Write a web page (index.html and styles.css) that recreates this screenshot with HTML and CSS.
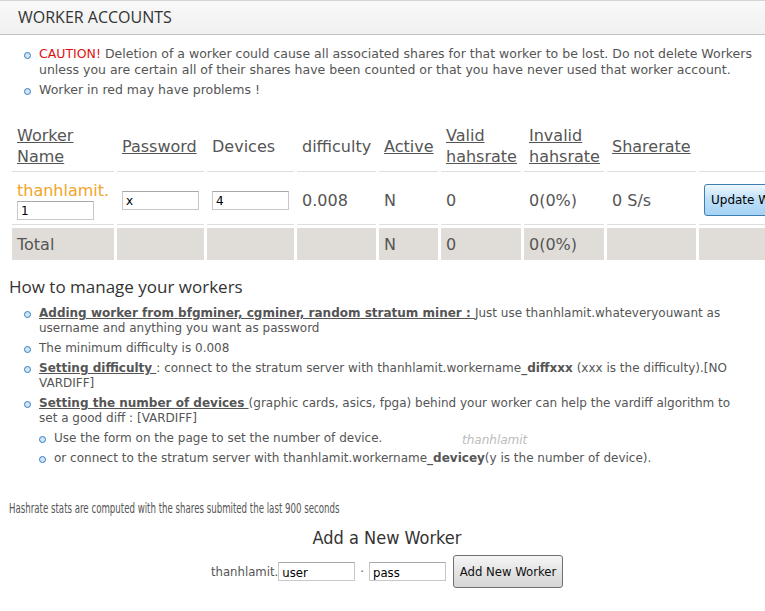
FILE: index.html
```html
<!DOCTYPE html>
<html lang="en">
<head>
    <meta charset="UTF-8">
    <meta name="viewport" content="width=device-width, initial-scale=1.0">
    <title>Worker Accounts</title>
    <link rel="stylesheet" href="styles.css">
</head>
<body>

    <div class="page-title">WORKER ACCOUNTS</div>

    <div class="content">
        <ul class="notes intro">
            <li><span class="caution">CAUTION!</span> Deletion of a worker could cause all associated shares for that worker to be lost. Do not delete Workers unless you are certain all of their shares have been counted or that you have never used that worker account.</li>
            <li>Worker in red may have problems !</li>
        </ul>

        <!-- Workers table -->
        <form id="workersForm">
            <table class="workers">
                <thead>
                    <tr>
                        <th class="col-name"><a href="#">Worker Name</a></th>
                        <th class="col-pass"><a href="#">Password</a></th>
                        <th class="col-dev">Devices</th>
                        <th class="col-diff">difficulty</th>
                        <th class="col-active"><a href="#">Active</a></th>
                        <th class="col-valid"><a href="#">Valid hahsrate</a></th>
                        <th class="col-invalid"><a href="#">Invalid hahsrate</a></th>
                        <th class="col-rate"><a href="#">Sharerate</a></th>
                        <th class="col-action"></th>
                    </tr>
                </thead>
                <tbody>
                    <tr>
                        <td>
                            <span class="prefix">thanhlamit.</span>
                            <input type="text" class="field" name="username" value="1">
                        </td>
                        <td><input type="text" class="field" name="password" value="x"></td>
                        <td><input type="text" class="field" name="devices" value="4"></td>
                        <td>0.008</td>
                        <td>N</td>
                        <td>0</td>
                        <td>0(0%)</td>
                        <td>0 S/s</td>
                        <td><button type="button" class="btn-update">Update Worker</button></td>
                    </tr>
                    <tr class="total">
                        <td>Total</td>
                        <td></td>
                        <td></td>
                        <td></td>
                        <td>N</td>
                        <td>0</td>
                        <td>0(0%)</td>
                        <td></td>
                        <td></td>
                    </tr>
                </tbody>
            </table>
        </form>

        <h3 class="section-title">How to manage your workers</h3>
        <ul class="notes help">
            <li><a href="#" class="strong-link">Adding worker from bfgminer, cgminer, random stratum miner : </a>Just use thanhlamit.whateveryouwant as username and anything you want as password</li>
            <li>The minimum difficulty is 0.008</li>
            <li><a href="#" class="strong-link">Setting difficulty </a> : connect to the stratum server with thanhlamit.workername<b>_diffxxx</b> (xxx is the difficulty).[NO VARDIFF]</li>
            <li><a href="#" class="strong-link">Setting the number of devices </a>(graphic cards, asics, fpga) behind your worker can help the vardiff algorithm to set a good diff : [VARDIFF]
                <ul class="notes sub">
                    <li>Use the form on the page to set the number of device.</li>
                    <li>or connect to the stratum server with thanhlamit.workername<b>_devicey</b>(y is the number of device).</li>
                </ul>
            </li>
        </ul>

        <p class="stats-note"><span>Hashrate stats are computed with the shares submited the last 900 seconds</span></p>

        <!-- Add worker -->
        <div class="add-worker">
            <h3>Add a New Worker</h3>
            <form id="addForm" class="add-row">
                <span>thanhlamit.</span><input type="text" class="field" name="newUser" value="user">
                <span class="dot">&middot;</span>
                <input type="text" class="field" name="newPass" value="pass">
                <button type="button" class="btn-add">Add New Worker</button>
            </form>
        </div>
    </div>

    <span class="watermark">thanhlamit</span>

</body>
</html>
```

FILE: styles.css
```css
* {
    margin: 0;
    padding: 0;
    box-sizing: border-box;
}

:root {
    --text-color: #555;
    --title-color: #333;
    --bullet-color: #2f7fc4;
    --row-line: #dedede;
    --total-bg: #e0ddd8;
    --orange: #f2a52a;
}

html {
    overflow-x: hidden;
}

body {
    position: relative;
    font-family: "DejaVu Sans", Verdana, sans-serif;
    font-size: 12px;
    color: var(--text-color);
    background: #fff;
}

/* Title bar */
.page-title {
    height: 35px;
    padding-left: 18px;
    line-height: 33px;
    font-family: "Open Sans", sans-serif;
    font-size: 16px;
    color: var(--title-color);
    background: linear-gradient(#f9f9f9, #f0f0f0);
    border-top: 1px solid #d4d4d4;
    border-bottom: 1px solid #c2c2c2;
}

.content {
    padding: 11px 0 0 9px;
}

/* Bulleted notes */
.notes {
    list-style: none;
    padding-left: 30px;
    line-height: 16px;
}

.notes.intro {
    font-size: 12.5px;
}

.notes li {
    position: relative;
    margin-bottom: 4px;
}

.notes li::before {
    content: "";
    position: absolute;
    left: -15px;
    top: 6px;
    width: 5px;
    height: 5px;
    border-radius: 50%;
    border: 1.5px solid var(--bullet-color);
    background: #d3e5f5;
}

.caution {
    color: #e01010;
}

/* Workers table */
.workers {
    margin-top: 21px;
    table-layout: fixed;
    width: 798px;
    border-spacing: 3px;
    font-size: 16px;
    line-height: 21px;
}

.workers th,
.workers td {
    text-align: left;
    vertical-align: middle;
    padding: 5px 5px 4px;
    border-bottom: 1px solid var(--row-line);
    font-weight: normal;
}

.workers th {
    padding: 3px 5px 4px;
}

.workers a {
    color: var(--text-color);
}

.col-name { width: 102px; }
.col-pass { width: 87px; }
.col-dev { width: 87px; }
.col-diff { width: 79px; }
.col-active { width: 59px; }
.col-valid { width: 80px; }
.col-invalid { width: 80px; }
.col-rate { width: 89px; }
.col-action { width: 105px; }

.prefix {
    display: block;
    color: var(--orange);
}

.field {
    display: block;
    width: 77px;
    height: 19px;
    padding: 1px 3px 0;
    font-family: "DejaVu Sans", Verdana, sans-serif;
    font-size: 12px;
    color: #000;
    border: 1px solid #c8c8c8;
    border-top-color: #a8a8a8;
    background: #fff;
}

.workers .total td {
    background: var(--total-bg);
    border-bottom: none;
    padding: 6px 5px 5px;
}

.btn-update {
    display: block;
    width: 100px;
    height: 32px;
    padding: 0 6px;
    font-family: "DejaVu Sans", Verdana, sans-serif;
    font-size: 12px;
    color: #000;
    text-align: left;
    white-space: nowrap;
    border: 1px solid #3d7fb3;
    border-radius: 3px;
    background: linear-gradient(#eef7fe, #bcdff8 50%, #a6d2f4);
}

/* Help section */
.section-title {
    margin-top: 12px;
    font-family: "Open Sans", sans-serif;
    font-size: 17px;
    font-weight: normal;
    line-height: 23px;
    color: var(--title-color);
}

.help {
    margin-top: 8px;
    margin-right: 22px;
    line-height: 15px;
}

.help li {
    margin-bottom: 5px;
}

.help li::before {
    top: 5px;
}

.help b {
    font-weight: bold;
}

.strong-link {
    font-weight: bold;
    color: var(--text-color);
}

.notes.sub {
    padding-left: 15px;
    margin-top: 5px;
    margin-right: 0;
    line-height: 15px;
    white-space: nowrap;
}

.notes.sub li:last-child {
    margin-bottom: 0;
}

.stats-note,
.add-worker {
    font-family: "Liberation Sans Narrow", "DejaVu Sans Condensed", sans-serif;
    font-stretch: condensed;
}

.stats-note {
    margin-top: 34px;
    font-size: 13.5px;
    line-height: 16px;
    white-space: nowrap;
}

/* this line is much narrower than the rest of the bottom block */
.stats-note span {
    display: inline-block;
    transform: scaleX(0.71);
    transform-origin: 0 50%;
}

.add-worker {
    width: 756px;
    text-align: center;
}

.add-worker h3 {
    margin-top: 11px;
    font-size: 18px;
    font-weight: normal;
    line-height: 22px;
    color: var(--title-color);
}

.add-row {
    display: flex;
    justify-content: center;
    align-items: center;
    margin-top: 6px;
    font-size: 13px;
}

.add-row .field {
    width: 77px;
    font-family: inherit;
    font-size: 13px;
}

.add-row .dot {
    padding: 0 5px;
}

.btn-add {
    margin-left: 7px;
    width: 110px;
    height: 33px;
    font-family: inherit;
    font-size: 13px;
    color: #111;
    border: 1px solid #707070;
    border-radius: 3px;
    background: linear-gradient(#f6f6f6, #e4e4e4 50%, #d6d6d6);
}

/* Light signature over the help list */
.watermark {
    position: absolute;
    left: 462px;
    top: 433px;
    font-style: italic;
    font-size: 12px;
    color: #bcbcbc;
}
```
